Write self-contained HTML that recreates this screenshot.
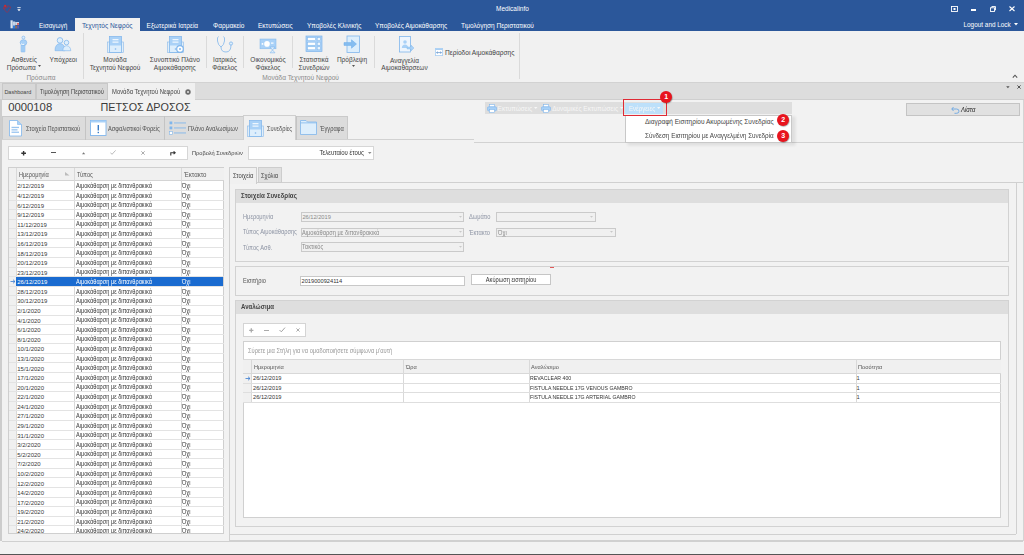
<!DOCTYPE html><html><head><meta charset="utf-8"><style>
html,body{margin:0;padding:0;}
body{width:1024px;height:555px;overflow:hidden;position:relative;background:#f2f2f2;font-family:"Liberation Sans", sans-serif;}
.t{position:absolute;white-space:nowrap;}
</style></head><body>
<div style="position:absolute;left:0px;top:0px;width:1024px;height:31px;background:#2b579a"></div>
<svg style="position:absolute;left:1.5px;top:4px" width="10" height="9.5" viewBox="0 0 10 9.5"><path d="M1.8 4.2 C1.2 2.2 3.5 1.2 4.8 2.6 C6.2 1.3 8.8 1.8 8.3 4.2 C7.8 6.2 6 7.6 5.2 8.4 C3.6 7.4 2.3 6 1.8 4.2Z" fill="none" stroke="#c8232b" stroke-width="0.7" stroke-dasharray="2 0.6"/><circle cx="3.2" cy="1.9" r="1.1" fill="#d42a2a"/><path d="M1 4.5 L5.5 3.5" stroke="#c8232b" stroke-width="0.6"/></svg>
<svg style="position:absolute;left:16.5px;top:6.5px" width="4" height="5" viewBox="0 0 4 5"><rect x="0.3" y="0.3" width="3.4" height="0.8" fill="#fff"/><path d="M0.3 2.3 L3.7 2.3 L2 4.3Z" fill="#fff"/></svg>
<div class="t" style="left:496px;top:6.42px;font-size:6.500px;line-height:6.500px;color:#fff;">Medicalinfo</div>
<svg style="position:absolute;left:951px;top:6px" width="7" height="6" viewBox="0 0 7 6"><rect x="0.5" y="0.5" width="6" height="5" fill="none" stroke="#fff" stroke-width="0.9"/><rect x="2.5" y="2" width="2" height="2" fill="#fff"/></svg>
<div style="position:absolute;left:971px;top:9.2px;width:5px;height:1.6px;background:#fff"></div>
<svg style="position:absolute;left:989.6px;top:5.8px" width="6" height="6" viewBox="0 0 6 6"><rect x="0.5" y="1.8" width="4" height="3.7" fill="none" stroke="#fff" stroke-width="0.9"/><path d="M1.8 1.8 V0.5 H5.5 V4 H4.5" fill="none" stroke="#fff" stroke-width="0.9"/></svg>
<svg style="position:absolute;left:1008.6px;top:6px" width="6" height="5.5" viewBox="0 0 6 5.5"><path d="M0.5 0.5 L5.5 5 M5.5 0.5 L0.5 5" stroke="#fff" stroke-width="1.1"/></svg>
<svg style="position:absolute;left:9.8px;top:20px" width="10" height="9" viewBox="0 0 10 9"><rect x="0.5" y="0.3" width="2.2" height="8" fill="#d9e3f0"/><rect x="2.7" y="1.5" width="2.5" height="6.5" fill="#c5d3e6"/><rect x="5.2" y="2" width="3.8" height="3" fill="#cfd8e4"/><rect x="7" y="3.2" width="2" height="1.5" fill="#e04848"/><rect x="3" y="5.5" width="2.2" height="3" fill="#2f7de0"/><rect x="5.2" y="5.5" width="2" height="3" fill="#8a6d5a"/><rect x="7.2" y="5.5" width="1.8" height="3" fill="#5a5ab0"/></svg>
<div style="position:absolute;left:75px;top:17.5px;width:64.5px;height:14px;background:#f1f1f1"></div>
<div class="t" style="left:39px;top:22.68px;font-size:6.400px;line-height:6.400px;color:#fff;">Εισαγωγή</div>
<div class="t" style="left:82px;top:22.57px;font-size:6.600px;line-height:6.600px;color:#2b579a;">Τεχνητός Νεφρός</div>
<div class="t" style="left:146.6px;top:22.62px;font-size:6.500px;line-height:6.500px;color:#fff;">Εξωτερικά Ιατρεία</div>
<div class="t" style="left:213px;top:22.62px;font-size:6.500px;line-height:6.500px;color:#fff;">Φαρμακείο</div>
<div class="t" style="left:258px;top:22.62px;font-size:6.500px;line-height:6.500px;color:#fff;">Εκτυπώσεις</div>
<div class="t" style="left:307px;top:22.62px;font-size:6.500px;line-height:6.500px;color:#fff;">Υποβολές Κλινικής</div>
<div class="t" style="left:375px;top:22.62px;font-size:6.500px;line-height:6.500px;color:#fff;">Υποβολές Αιμοκάθαρσης</div>
<div class="t" style="left:461px;top:22.62px;font-size:6.500px;line-height:6.500px;color:#fff;">Τιμολόγηση Περιστατικού</div>
<div class="t" style="left:963.5px;top:21.88px;font-size:6.400px;line-height:6.400px;color:#fff;">Logout and Lock</div>
<svg style="position:absolute;left:1014px;top:23px" width="5" height="3" viewBox="0 0 5 3"><path d="M0 0 L4 0 L2 2.5Z" fill="#fff"/></svg>
<div style="position:absolute;left:0px;top:31px;width:1024px;height:51px;background:#f1f1f1"></div>
<div style="position:absolute;left:0px;top:81.5px;width:1024px;height:1px;background:#d5d5d5"></div>
<div style="position:absolute;left:83px;top:32.5px;width:1px;height:46px;background:#dadada"></div>
<div style="position:absolute;left:518.7px;top:32.5px;width:1px;height:46px;background:#dadada"></div>
<div style="position:absolute;left:206.4px;top:36px;width:1px;height:31.7px;background:#dadada"></div>
<div style="position:absolute;left:243.4px;top:36px;width:1px;height:31.7px;background:#dadada"></div>
<div style="position:absolute;left:292.2px;top:36px;width:1px;height:31.7px;background:#dadada"></div>
<div style="position:absolute;left:374.0px;top:36px;width:1px;height:31.7px;background:#dadada"></div>
<svg style="position:absolute;left:19px;top:35px" width="9" height="18" viewBox="0 0 9 18"><rect x="2" y="10" width="4" height="7" rx="0.5" fill="#a9d1f7" stroke="#80b6ec" stroke-width="0.5"/><path d="M4 10.5 V17" stroke="#80b6ec" stroke-width="0.4"/><ellipse cx="4.5" cy="7.6" rx="3.3" ry="2.9" fill="#a9d1f7" stroke="#80b6ec" stroke-width="0.6"/><path d="M2 8.8 Q3 9.8 5.2 9.3" stroke="#fff" stroke-width="0.9" fill="none"/><rect x="3" y="1.2" width="2.8" height="2.8" rx="1.2" fill="#ddeefc" stroke="#80b6ec" stroke-width="0.7"/></svg>
<div class="t" style="left:-126px;width:300px;text-align:center;top:57.22px;font-size:6.500px;line-height:6.500px;color:#444;">Ασθενείς</div>
<div class="t" style="left:6.7px;top:65.02px;font-size:6.500px;line-height:6.500px;color:#444;">Πρόσωπα</div>
<svg style="position:absolute;left:38px;top:65px" width="4" height="3" viewBox="0 0 4 3"><path d="M0 0 L3 0 L1.5 2Z" fill="#555"/></svg>
<div class="t" style="left:-109px;width:300px;text-align:center;top:75.42px;font-size:6.500px;line-height:6.500px;color:#8a8a8a;">Πρόσωπα</div>
<svg style="position:absolute;left:54px;top:36px" width="18" height="16" viewBox="0 0 18 16"><circle cx="6" cy="4.4" r="2.8" fill="#ddeefc" stroke="#80b6ec" stroke-width="0.8"/><path d="M1 14.7 Q1 8 6 7.6 Q11 8 11 14.7Z" fill="#a9d1f7" stroke="#80b6ec" stroke-width="0.6"/><circle cx="12.5" cy="6.6" r="2.3" fill="#ddeefc" stroke="#80b6ec" stroke-width="0.8"/><path d="M8.8 14.7 Q9 10 12.5 9.7 Q16.5 10 16.8 14.7Z" fill="#ddeefc" stroke="#80b6ec" stroke-width="0.6"/></svg>
<div class="t" style="left:-86.8px;width:300px;text-align:center;top:57.22px;font-size:6.500px;line-height:6.500px;color:#444;">Υπόχρεοι</div>
<svg style="position:absolute;left:107px;top:36px" width="18" height="18" viewBox="0 0 18 18"><rect x="0.5" y="6" width="16" height="10.5" fill="#ddeefc" stroke="#80b6ec" stroke-width="0.7" opacity="0.8"/><rect x="2.5" y="0.5" width="12" height="16" fill="#ddeefc" stroke="#80b6ec" stroke-width="0.8"/><rect x="3" y="1" width="11" height="8.5" fill="#a9d1f7"/><rect x="5.5" y="3.2" width="6" height="1" fill="#fff"/><rect x="5.5" y="5.6" width="6" height="1" fill="#fff"/><circle cx="8.5" cy="13" r="0.8" fill="#80b6ec"/></svg>
<div class="t" style="left:-35px;width:300px;text-align:center;top:57.22px;font-size:6.500px;line-height:6.500px;color:#444;">Μονάδα</div>
<div class="t" style="left:-35px;width:300px;text-align:center;top:65.02px;font-size:6.500px;line-height:6.500px;color:#444;">Τεχνητού Νεφρού</div>
<svg style="position:absolute;left:166.5px;top:36px" width="18" height="18" viewBox="0 0 18 18"><rect x="0.5" y="6" width="16" height="10.5" fill="#ddeefc" stroke="#80b6ec" stroke-width="0.7" opacity="0.8"/><rect x="2.5" y="0.5" width="12" height="16" fill="#ddeefc" stroke="#80b6ec" stroke-width="0.8"/><rect x="3" y="1" width="11" height="8.5" fill="#a9d1f7"/><rect x="5.5" y="3.2" width="6" height="1" fill="#fff"/><rect x="5.5" y="5.6" width="6" height="1" fill="#fff"/><circle cx="8.5" cy="13" r="0.8" fill="#80b6ec"/><circle cx="13" cy="13" r="3.3" fill="#fff" stroke="#80b6ec" stroke-width="1.2"/><circle cx="13" cy="13" r="1" fill="#80b6ec"/></svg>
<div class="t" style="left:24.80000000000001px;width:300px;text-align:center;top:57.22px;font-size:6.500px;line-height:6.500px;color:#444;">Συνοπτικό Πλάνο</div>
<div class="t" style="left:24.80000000000001px;width:300px;text-align:center;top:65.02px;font-size:6.500px;line-height:6.500px;color:#444;">Αιμοκάθαρσης</div>
<svg style="position:absolute;left:216px;top:35px" width="18" height="18" viewBox="0 0 18 18"><path d="M2.5 1.5 Q1 2 1.5 6 Q2 10 5 12 Q8 10 8.5 6 Q9 2 7.5 1.5" fill="none" stroke="#80b6ec" stroke-width="0.8"/><path d="M5 12 Q5 17 10 17 Q15 17 15 10" fill="none" stroke="#80b6ec" stroke-width="0.8"/><circle cx="15" cy="8.5" r="1.6" fill="#ddeefc" stroke="#80b6ec" stroke-width="0.8"/></svg>
<div class="t" style="left:74.69999999999999px;width:300px;text-align:center;top:57.22px;font-size:6.500px;line-height:6.500px;color:#444;">Ιατρικός</div>
<div class="t" style="left:74.69999999999999px;width:300px;text-align:center;top:65.02px;font-size:6.500px;line-height:6.500px;color:#444;">Φάκελος</div>
<svg style="position:absolute;left:259px;top:38px" width="18" height="16" viewBox="0 0 18 16"><rect x="1" y="1" width="16" height="9.8" fill="#a9d1f7" stroke="#80b6ec" stroke-width="0.5"/><circle cx="8" cy="5.9" r="2.8" fill="#fff"/><circle cx="3.5" cy="5.9" r="0.9" fill="#fff"/><rect x="12" y="4.5" width="2.5" height="1.2" fill="#fff"/><path d="M11 9 L16 9 L13.5 12 L16 14.8 L11 14.8 L13.5 12Z" fill="#ddeefc" stroke="#80b6ec" stroke-width="0.6"/></svg>
<div class="t" style="left:118px;width:300px;text-align:center;top:57.22px;font-size:6.500px;line-height:6.500px;color:#444;">Οικονομικός</div>
<div class="t" style="left:118px;width:300px;text-align:center;top:65.02px;font-size:6.500px;line-height:6.500px;color:#444;">Φάκελος</div>
<svg style="position:absolute;left:305px;top:35px" width="18" height="18" viewBox="0 0 18 18"><rect x="1" y="1" width="16" height="15.6" fill="#a9d1f7" stroke="#80b6ec" stroke-width="0.7"/><rect x="2.6" y="2.6" width="8" height="3" fill="#fff" stroke="#80b6ec" stroke-width="0.5"/><rect x="12.2" y="2.6" width="3.2" height="3" fill="#eef6fd" stroke="#80b6ec" stroke-width="0.5"/><rect x="2.6" y="7.199999999999999" width="8" height="3" fill="#fff" stroke="#80b6ec" stroke-width="0.5"/><rect x="12.2" y="7.199999999999999" width="3.2" height="3" fill="#eef6fd" stroke="#80b6ec" stroke-width="0.5"/><rect x="2.6" y="11.799999999999999" width="8" height="3" fill="#fff" stroke="#80b6ec" stroke-width="0.5"/><rect x="12.2" y="11.799999999999999" width="3.2" height="3" fill="#eef6fd" stroke="#80b6ec" stroke-width="0.5"/></svg>
<div class="t" style="left:164px;width:300px;text-align:center;top:57.22px;font-size:6.500px;line-height:6.500px;color:#444;">Στατιστικά</div>
<div class="t" style="left:164px;width:300px;text-align:center;top:65.02px;font-size:6.500px;line-height:6.500px;color:#444;">Συνεδριών</div>
<svg style="position:absolute;left:343px;top:35px" width="18" height="18" viewBox="0 0 18 18"><rect x="4" y="1" width="12.5" height="16.5" fill="#ddeefc" stroke="#80b6ec" stroke-width="0.8"/><path d="M1 7.6 L8.5 7.6 L8.5 4.8 L13.5 9 L8.5 13.2 L8.5 10.4 L1 10.4Z" fill="#86bdf0" stroke="#6aaae8" stroke-width="0.5"/></svg>
<div class="t" style="left:202px;width:300px;text-align:center;top:57.22px;font-size:6.500px;line-height:6.500px;color:#444;">Πρόβλεψη</div>
<svg style="position:absolute;left:351.7px;top:65.3px" width="4" height="3" viewBox="0 0 4 3"><path d="M0 0 L3 0 L1.5 2Z" fill="#555"/></svg>
<div class="t" style="left:150.60000000000002px;width:300px;text-align:center;top:75.37px;font-size:6.600px;line-height:6.600px;color:#8a8a8a;">Μονάδα Τεχνητού Νεφρού</div>
<svg style="position:absolute;left:397px;top:35px" width="18" height="18" viewBox="0 0 18 18"><rect x="2.5" y="1.5" width="11" height="15.5" fill="#eef5fd" stroke="#80b6ec" stroke-width="0.8"/><circle cx="8" cy="7" r="1.8" fill="#a9d1f7"/><path d="M4.8 13 Q5 9.5 8 9.5 Q11 9.5 11 13Z" fill="#a9d1f7"/><path d="M10 12 L14 12 L14 10 L17 13 L14 16 L14 14 L10 14Z" fill="#a9d1f7" stroke="#80b6ec" stroke-width="0.4"/></svg>
<div class="t" style="left:254.5px;width:300px;text-align:center;top:57.72px;font-size:6.500px;line-height:6.500px;color:#444;">Αναγγελία</div>
<div class="t" style="left:254.5px;width:300px;text-align:center;top:65.12px;font-size:6.500px;line-height:6.500px;color:#444;">Αιμοκαθάρσεων</div>
<svg style="position:absolute;left:434.8px;top:47.8px" width="8" height="8" viewBox="0 0 8 8"><rect x="0.4" y="0.4" width="7.2" height="7.2" fill="#fff" stroke="#a9cff3" stroke-width="0.8"/><rect x="0.4" y="0.4" width="7.2" height="1.6" fill="#a9cff3"/><path d="M1.6 4.6 H6.4 M1.6 4.6 L2.7 3.7 M1.6 4.6 L2.7 5.5 M6.4 4.6 L5.3 3.7 M6.4 4.6 L5.3 5.5" stroke="#3a78c0" stroke-width="0.6" fill="none"/></svg>
<div class="t" style="left:445px;top:50.07px;font-size:6.600px;line-height:6.600px;color:#444;">Περίοδοι Αιμοκάθαρσης</div>
<svg style="position:absolute;left:1011.6px;top:74px" width="6" height="5" viewBox="0 0 6 5"><path d="M0.8 3.6 L3 1.2 L5.2 3.6" fill="none" stroke="#555" stroke-width="1.1"/></svg>
<div style="position:absolute;left:0px;top:81.5px;width:1024px;height:18px;background:#dddddd;border-top:1px solid #d2d2d2;border-bottom:1px solid #cfcfcf;box-sizing:border-box"></div>
<div style="position:absolute;left:1.5px;top:83px;width:34.5px;height:16.5px;background:#d8d8d8;border:1px solid #c8c8c8;box-sizing:border-box"></div>
<div class="t" style="left:4.4px;top:89.77px;font-size:5.500px;line-height:5.500px;color:#444;">Dashboard</div>
<div style="position:absolute;left:36px;top:83px;width:72px;height:16.5px;background:#d8d8d8;border:1px solid #c8c8c8;box-sizing:border-box"></div>
<div class="t" style="left:40.1px;top:89.35px;font-size:6.270px;line-height:6.270px;color:#444;transform:scaleX(0.9091);transform-origin:left center;">Τιμολόγηση Περιστατικού</div>
<div style="position:absolute;left:108px;top:83px;width:87px;height:16.5px;background:#f0f0f0"></div>
<div class="t" style="left:111.6px;top:89.25px;font-size:6.457px;line-height:6.457px;color:#444;transform:scaleX(0.9091);transform-origin:left center;">Μονάδα Τεχνητού Νεφρού</div>
<svg style="position:absolute;left:184.6px;top:88.6px" width="6" height="6" viewBox="0 0 6 6"><circle cx="3" cy="3" r="2.7" fill="#6a6a6a"/><path d="M1.9 1.9 L4.1 4.1 M4.1 1.9 L1.9 4.1" stroke="#ddd" stroke-width="0.8"/></svg>
<svg style="position:absolute;left:1006.2px;top:85.6px" width="4" height="3" viewBox="0 0 4 3"><path d="M0.2 0.3 L3.6 0.3 L1.9 2.2Z" fill="#555"/></svg>
<svg style="position:absolute;left:1016.8px;top:84.8px" width="4" height="4" viewBox="0 0 4 4"><path d="M0.4 0.4 L3.6 3.6 M3.6 0.4 L0.4 3.6" stroke="#555" stroke-width="1"/></svg>
<div style="position:absolute;left:0px;top:99.5px;width:1.6px;height:441.5px;background:#cdcdcd"></div>
<div class="t" style="left:8.2px;top:101.58px;font-size:11.300px;line-height:11.300px;color:#3a3a3a;">0000108</div>
<div class="t" style="left:100.4px;top:101.86px;font-size:10.800px;line-height:10.800px;color:#3a3a3a;">ΠΕΤΣΟΣ ΔΡΟΣΟΣ</div>
<div style="position:absolute;left:473.7px;top:100px;width:550.3px;height:43.4px;background:#f2f2f2;border-bottom:1px solid #d2d2d2;box-sizing:border-box"></div>
<div style="position:absolute;left:485px;top:102.4px;width:307px;height:11.4px;background:#dedede"></div>
<svg style="position:absolute;left:486.5px;top:104px" width="10" height="9" viewBox="0 0 10 9"><rect x="2.5" y="0.5" width="5" height="2.5" fill="#fff" stroke="#80b6ec" stroke-width="0.6"/><rect x="0.5" y="2.8" width="9" height="4" rx="1" fill="#a9d1f7" stroke="#80b6ec" stroke-width="0.6"/><rect x="2.5" y="5.5" width="5" height="3" fill="#fff" stroke="#80b6ec" stroke-width="0.6"/></svg>
<div class="t" style="left:497.6px;top:106.22px;font-size:6.500px;line-height:6.500px;color:#f7f7f7;">Εκτυπώσεις</div>
<svg style="position:absolute;left:534px;top:107px" width="4" height="3" viewBox="0 0 4 3"><path d="M0 0 L3.5 0 L1.75 2Z" fill="#f7f7f7"/></svg>
<svg style="position:absolute;left:540.7px;top:104px" width="10" height="9" viewBox="0 0 10 9"><rect x="2.5" y="0.5" width="5" height="2.5" fill="#fff" stroke="#80b6ec" stroke-width="0.6"/><rect x="0.5" y="2.8" width="9" height="4" rx="1" fill="#a9d1f7" stroke="#80b6ec" stroke-width="0.6"/><rect x="2.5" y="5.5" width="5" height="3" fill="#fff" stroke="#80b6ec" stroke-width="0.6"/></svg>
<div class="t" style="left:552.2px;top:106.22px;font-size:6.500px;line-height:6.500px;color:#f7f7f7;">Δυναμικές Εκτυπώσεις</div>
<svg style="position:absolute;left:619.5px;top:107px" width="4" height="3" viewBox="0 0 4 3"><path d="M0 0 L3.5 0 L1.75 2Z" fill="#f7f7f7"/></svg>
<div style="position:absolute;left:624.8px;top:102.5px;width:38.2px;height:11px;background:#bde0fa"></div>
<div class="t" style="left:628.75px;top:106.11px;font-size:6.710px;line-height:6.710px;color:#f7f7f7;transform:scaleX(0.9091);transform-origin:left center;">Ενέργειες</div>
<svg style="position:absolute;left:656.5px;top:107px" width="4" height="3" viewBox="0 0 4 3"><path d="M0 0 L3.5 0 L1.75 2Z" fill="#f7f7f7"/></svg>
<div style="position:absolute;left:906px;top:103px;width:113.5px;height:12.5px;background:#e1e1e1;border:1px solid #c4c4c4;box-sizing:border-box"></div>
<svg style="position:absolute;left:950.5px;top:105.5px" width="9" height="8" viewBox="0 0 9 8"><path d="M2.5 1 L0.8 3 L2.5 5 M0.8 3 H5.5 Q8 3 8 5.2 Q8 7.3 5.5 7.3 H3.5" fill="none" stroke="#6aa6e3" stroke-width="0.9"/></svg>
<div class="t" style="left:960.5px;top:106.53px;font-size:6.490px;line-height:6.490px;color:#222;transform:scaleX(0.9091);transform-origin:left center;font-style:italic">Λίστα</div>
<div style="position:absolute;left:2.3px;top:115.5px;width:345.7px;height:24px;background:#dcdcdc;border:1px solid #cacaca;border-bottom:none;box-sizing:border-box"></div>
<div style="position:absolute;left:2px;top:139.2px;width:471.7px;height:1px;background:#d2d2d2"></div>
<div style="position:absolute;left:85.3px;top:116px;width:1px;height:23.5px;background:#c4c4c4"></div>
<div style="position:absolute;left:164.2px;top:116px;width:1px;height:23.5px;background:#c4c4c4"></div>
<div style="position:absolute;left:296.2px;top:116px;width:1px;height:23.5px;background:#c4c4c4"></div>
<div style="position:absolute;left:242.7px;top:115px;width:53.5px;height:25px;background:#f0f0f0;border:1px solid #cfcfcf;border-bottom:none;box-sizing:border-box"></div>
<svg style="position:absolute;left:8.5px;top:119.5px" width="14" height="17" viewBox="0 0 14 17"><path d="M0.5 0.5 H8.5 L12.5 4.5 V16 H0.5Z" fill="#fff" stroke="#80b6ec" stroke-width="0.8"/><path d="M8.5 0.5 V4.5 H12.5" fill="#a9d1f7" stroke="#80b6ec" stroke-width="0.6"/><rect x="2.5" y="6.8" width="7.5" height="1.3" fill="#80b6ec" opacity="0.8"/><rect x="2.5" y="9.2" width="6" height="1.3" fill="#80b6ec" opacity="0.8"/><rect x="2.5" y="11.6" width="7.5" height="1.3" fill="#80b6ec" opacity="0.8"/></svg>
<div class="t" style="left:26.4px;top:125.75px;font-size:6.270px;line-height:6.270px;color:#505050;transform:scaleX(0.9091);transform-origin:left center;">Στοιχεία Περιστατικού</div>
<svg style="position:absolute;left:89.5px;top:119.5px" width="17" height="16" viewBox="0 0 17 16"><rect x="0.5" y="0.5" width="15.5" height="15" fill="#fff" stroke="#80b6ec" stroke-width="0.9"/><rect x="0.5" y="0.5" width="15.5" height="2" fill="#a9d1f7"/><rect x="7.6" y="5" width="1.4" height="5.5" fill="#3a7cc6"/><rect x="7.6" y="11.8" width="1.4" height="1.4" fill="#3a7cc6"/></svg>
<div class="t" style="left:108px;top:125.75px;font-size:6.270px;line-height:6.270px;color:#505050;transform:scaleX(0.9091);transform-origin:left center;">Ασφαλιστικοί Φορείς</div>
<svg style="position:absolute;left:168.5px;top:120.5px" width="18" height="14" viewBox="0 0 18 14"><rect x="0.5" y="0.5" width="2.8" height="2.8" fill="#80b6ec"/><rect x="0.5" y="5.5" width="2.8" height="2.8" fill="#80b6ec"/><rect x="0.5" y="10.5" width="2.8" height="2.8" fill="#fff" stroke="#80b6ec" stroke-width="0.6"/><rect x="5" y="1.5" width="12" height="0.9" fill="#80b6ec"/><rect x="5" y="6.5" width="12" height="0.9" fill="#80b6ec"/><rect x="5" y="11.5" width="12" height="0.9" fill="#80b6ec"/></svg>
<div class="t" style="left:188.4px;top:125.75px;font-size:6.270px;line-height:6.270px;color:#505050;transform:scaleX(0.9091);transform-origin:left center;">Πλάνο Αναλωσίμων</div>
<svg style="position:absolute;left:246.5px;top:119.5px" width="18" height="18" viewBox="0 0 18 18"><rect x="0.5" y="6" width="16" height="10.5" fill="#ddeefc" stroke="#80b6ec" stroke-width="0.7" opacity="0.8"/><rect x="2.5" y="0.5" width="12" height="16" fill="#ddeefc" stroke="#80b6ec" stroke-width="0.8"/><rect x="3" y="1" width="11" height="8.5" fill="#a9d1f7"/><rect x="5.5" y="3.2" width="6" height="1" fill="#fff"/><rect x="5.5" y="5.6" width="6" height="1" fill="#fff"/><circle cx="8.5" cy="13" r="0.8" fill="#80b6ec"/></svg>
<div class="t" style="left:266.9px;top:125.75px;font-size:6.270px;line-height:6.270px;color:#505050;transform:scaleX(0.9091);transform-origin:left center;">Συνεδρίες</div>
<svg style="position:absolute;left:299.5px;top:120px" width="18" height="15" viewBox="0 0 18 15"><path d="M0.5 0.5 H6 L7.5 2 H16.5 V14.5 H0.5Z" fill="#ddeefc" stroke="#80b6ec" stroke-width="0.8"/><rect x="0.5" y="2.5" width="16" height="0.8" fill="#80b6ec"/></svg>
<div class="t" style="left:320.2px;top:125.75px;font-size:6.270px;line-height:6.270px;color:#505050;transform:scaleX(0.9091);transform-origin:left center;">Έγγραφα</div>
<div style="position:absolute;left:8.2px;top:146.2px;width:180px;height:13.5px;background:#fff;border:1px solid #d6d6d6;box-sizing:border-box"></div>
<svg style="position:absolute;left:21px;top:150.5px" width="6" height="5" viewBox="0 0 6 5"><path d="M2.6 0 V4.6 M0.3 2.3 H5" stroke="#333" stroke-width="1.4"/></svg>
<div style="position:absolute;left:51px;top:152px;width:4.8px;height:1.4px;background:#555"></div>
<svg style="position:absolute;left:81.8px;top:151.5px" width="4" height="3" viewBox="0 0 4 3"><path d="M0 2.3 L3.2 2.3 L1.6 0.2Z" fill="#777"/></svg>
<svg style="position:absolute;left:110.2px;top:150.4px" width="6" height="5" viewBox="0 0 6 5"><path d="M0.4 2.6 L2 4.3 L5.6 0.4" fill="none" stroke="#aaa" stroke-width="0.8"/></svg>
<svg style="position:absolute;left:140.9px;top:150.9px" width="4" height="4" viewBox="0 0 4 4"><path d="M0.3 0.3 L3.7 3.7 M3.7 0.3 L0.3 3.7" stroke="#999" stroke-width="0.8"/></svg>
<svg style="position:absolute;left:169.5px;top:150.5px" width="6" height="5" viewBox="0 0 6 5"><path d="M0.8 4.6 V1.8 H5 M3.6 0.4 L5.2 1.8 L3.6 3.2" fill="none" stroke="#333" stroke-width="1.1"/></svg>
<div class="t" style="left:191.75px;top:150.28px;font-size:6.215px;line-height:6.215px;color:#444;transform:scaleX(0.9091);transform-origin:left center;">Προβολή Συνεδριών</div>
<div style="position:absolute;left:248.4px;top:146.3px;width:125.9px;height:13.3px;background:#fff;border:1px solid #d6d6d6;box-sizing:border-box"></div>
<div class="t" style="left:63.69999999999999px;width:300px;text-align:right;top:149.77px;font-size:6.600px;line-height:6.600px;color:#333;transform:scaleX(0.9091);transform-origin:right center;">Τελευταίου έτους</div>
<svg style="position:absolute;left:367.8px;top:152.3px" width="4" height="3" viewBox="0 0 4 3"><path d="M0 0 L3.5 0 L1.75 2Z" fill="#888"/></svg>
<div style="position:absolute;left:8.1px;top:167px;width:216.4px;height:366.75px;background:#fff;border:1px solid #cfcfcf;box-sizing:border-box"></div>
<div style="position:absolute;left:8.6px;top:167.5px;width:215.4px;height:13.5px;background:#f0f0f0;border-bottom:1px solid #d4d4d4;box-sizing:border-box"></div>
<div style="position:absolute;left:8.6px;top:167.5px;width:8px;height:365.75px;background:#f0f0f0"></div>
<div style="position:absolute;left:16.1px;top:167.5px;width:0.8px;height:365.75px;background:#d9d9d9"></div>
<div style="position:absolute;left:74.4px;top:167.5px;width:0.8px;height:365.75px;background:#d9d9d9"></div>
<div style="position:absolute;left:180.9px;top:167.5px;width:0.8px;height:365.75px;background:#d9d9d9"></div>
<div class="t" style="left:19px;top:171.67px;font-size:6.600px;line-height:6.600px;color:#555;transform:scaleX(0.8545);transform-origin:left center;">Ημερομηνία</div>
<svg style="position:absolute;left:64.5px;top:172px" width="5" height="4" viewBox="0 0 5 4"><path d="M0 0 L4.5 3.5 L0 3.5Z" fill="#bbb"/></svg>
<div class="t" style="left:77.4px;top:171.67px;font-size:6.600px;line-height:6.600px;color:#555;transform:scaleX(0.8636);transform-origin:left center;">Τύπος</div>
<div class="t" style="left:184.3px;top:171.61px;font-size:6.710px;line-height:6.710px;color:#555;transform:scaleX(0.9091);transform-origin:left center;">Έκτακτο</div>
<div style="position:absolute;left:8.1px;top:167px;width:216.4px;height:365.75px;overflow:hidden">
<div style="position:absolute;left:0.5px;top:23px;width:215.4px;height:1px;background:#e3e3e3"></div>
<div class="t" style="left:9.200000000000001px;top:16.44px;font-size:6.000px;line-height:6.000px;color:#383838;">2/12/2019</div>
<div class="t" style="left:67.60000000000001px;top:16.11px;font-size:6.600px;line-height:6.600px;color:#383838;transform:scaleX(0.8482);transform-origin:left center;">Αιμοκάθαρση με διπανθρακικά</div>
<div class="t" style="left:174.4px;top:16.11px;font-size:6.600px;line-height:6.600px;color:#383838;transform:scaleX(0.8482);transform-origin:left center;">Όχι</div>
<div style="position:absolute;left:0.5px;top:33px;width:215.4px;height:1px;background:#e3e3e3"></div>
<div class="t" style="left:9.200000000000001px;top:26.02px;font-size:6.000px;line-height:6.000px;color:#383838;">4/12/2019</div>
<div class="t" style="left:67.60000000000001px;top:25.69px;font-size:6.600px;line-height:6.600px;color:#383838;transform:scaleX(0.8482);transform-origin:left center;">Αιμοκάθαρση με διπανθρακικά</div>
<div class="t" style="left:174.4px;top:25.69px;font-size:6.600px;line-height:6.600px;color:#383838;transform:scaleX(0.8482);transform-origin:left center;">Όχι</div>
<div style="position:absolute;left:0.5px;top:42px;width:215.4px;height:1px;background:#e3e3e3"></div>
<div class="t" style="left:9.200000000000001px;top:35.61px;font-size:6.000px;line-height:6.000px;color:#383838;">6/12/2019</div>
<div class="t" style="left:67.60000000000001px;top:35.28px;font-size:6.600px;line-height:6.600px;color:#383838;transform:scaleX(0.8482);transform-origin:left center;">Αιμοκάθαρση με διπανθρακικά</div>
<div class="t" style="left:174.4px;top:35.28px;font-size:6.600px;line-height:6.600px;color:#383838;transform:scaleX(0.8482);transform-origin:left center;">Όχι</div>
<div style="position:absolute;left:0.5px;top:52px;width:215.4px;height:1px;background:#e3e3e3"></div>
<div class="t" style="left:9.200000000000001px;top:45.19px;font-size:6.000px;line-height:6.000px;color:#383838;">9/12/2019</div>
<div class="t" style="left:67.60000000000001px;top:44.86px;font-size:6.600px;line-height:6.600px;color:#383838;transform:scaleX(0.8482);transform-origin:left center;">Αιμοκάθαρση με διπανθρακικά</div>
<div class="t" style="left:174.4px;top:44.86px;font-size:6.600px;line-height:6.600px;color:#383838;transform:scaleX(0.8482);transform-origin:left center;">Όχι</div>
<div style="position:absolute;left:0.5px;top:61px;width:215.4px;height:1px;background:#e3e3e3"></div>
<div class="t" style="left:9.200000000000001px;top:54.77px;font-size:6.000px;line-height:6.000px;color:#383838;">11/12/2019</div>
<div class="t" style="left:67.60000000000001px;top:54.44px;font-size:6.600px;line-height:6.600px;color:#383838;transform:scaleX(0.8482);transform-origin:left center;">Αιμοκάθαρση με διπανθρακικά</div>
<div class="t" style="left:174.4px;top:54.44px;font-size:6.600px;line-height:6.600px;color:#383838;transform:scaleX(0.8482);transform-origin:left center;">Όχι</div>
<div style="position:absolute;left:0.5px;top:71px;width:215.4px;height:1px;background:#e3e3e3"></div>
<div class="t" style="left:9.200000000000001px;top:64.36px;font-size:6.000px;line-height:6.000px;color:#383838;">13/12/2019</div>
<div class="t" style="left:67.60000000000001px;top:64.03px;font-size:6.600px;line-height:6.600px;color:#383838;transform:scaleX(0.8482);transform-origin:left center;">Αιμοκάθαρση με διπανθρακικά</div>
<div class="t" style="left:174.4px;top:64.03px;font-size:6.600px;line-height:6.600px;color:#383838;transform:scaleX(0.8482);transform-origin:left center;">Όχι</div>
<div style="position:absolute;left:0.5px;top:80px;width:215.4px;height:1px;background:#e3e3e3"></div>
<div class="t" style="left:9.200000000000001px;top:73.94px;font-size:6.000px;line-height:6.000px;color:#383838;">16/12/2019</div>
<div class="t" style="left:67.60000000000001px;top:73.61px;font-size:6.600px;line-height:6.600px;color:#383838;transform:scaleX(0.8482);transform-origin:left center;">Αιμοκάθαρση με διπανθρακικά</div>
<div class="t" style="left:174.4px;top:73.61px;font-size:6.600px;line-height:6.600px;color:#383838;transform:scaleX(0.8482);transform-origin:left center;">Όχι</div>
<div style="position:absolute;left:0.5px;top:90px;width:215.4px;height:1px;background:#e3e3e3"></div>
<div class="t" style="left:9.200000000000001px;top:83.52px;font-size:6.000px;line-height:6.000px;color:#383838;">18/12/2019</div>
<div class="t" style="left:67.60000000000001px;top:83.19px;font-size:6.600px;line-height:6.600px;color:#383838;transform:scaleX(0.8482);transform-origin:left center;">Αιμοκάθαρση με διπανθρακικά</div>
<div class="t" style="left:174.4px;top:83.19px;font-size:6.600px;line-height:6.600px;color:#383838;transform:scaleX(0.8482);transform-origin:left center;">Όχι</div>
<div style="position:absolute;left:0.5px;top:100px;width:215.4px;height:1px;background:#e3e3e3"></div>
<div class="t" style="left:9.200000000000001px;top:93.11px;font-size:6.000px;line-height:6.000px;color:#383838;">20/12/2019</div>
<div class="t" style="left:67.60000000000001px;top:92.78px;font-size:6.600px;line-height:6.600px;color:#383838;transform:scaleX(0.8482);transform-origin:left center;">Αιμοκάθαρση με διπανθρακικά</div>
<div class="t" style="left:174.4px;top:92.78px;font-size:6.600px;line-height:6.600px;color:#383838;transform:scaleX(0.8482);transform-origin:left center;">Όχι</div>
<div style="position:absolute;left:0.5px;top:109px;width:215.4px;height:1px;background:#e3e3e3"></div>
<div class="t" style="left:9.200000000000001px;top:102.69px;font-size:6.000px;line-height:6.000px;color:#383838;">23/12/2019</div>
<div class="t" style="left:67.60000000000001px;top:102.36px;font-size:6.600px;line-height:6.600px;color:#383838;transform:scaleX(0.8482);transform-origin:left center;">Αιμοκάθαρση με διπανθρακικά</div>
<div class="t" style="left:174.4px;top:102.36px;font-size:6.600px;line-height:6.600px;color:#383838;transform:scaleX(0.8482);transform-origin:left center;">Όχι</div>
<div style="position:absolute;left:8.299999999999999px;top:110.08000000000001px;width:207.1px;height:8.783px;background:#1a6bd0"></div>
<div style="position:absolute;left:0.5px;top:119px;width:215.4px;height:1px;background:#e3e3e3"></div>
<div class="t" style="left:9.200000000000001px;top:112.27px;font-size:6.000px;line-height:6.000px;color:#fff;">26/12/2019</div>
<div class="t" style="left:67.60000000000001px;top:111.94px;font-size:6.600px;line-height:6.600px;color:#fff;transform:scaleX(0.8482);transform-origin:left center;">Αιμοκάθαρση με διπανθρακικά</div>
<div class="t" style="left:174.4px;top:111.94px;font-size:6.600px;line-height:6.600px;color:#fff;transform:scaleX(0.8482);transform-origin:left center;">Όχι</div>
<svg style="position:absolute;left:1.9000000000000004px;top:112.28px" width="6" height="5" viewBox="0 0 6 5"><path d="M0.5 2.5 H5 M3 0.7 L5 2.5 L3 4.3" fill="none" stroke="#3a7cd0" stroke-width="0.8"/></svg>
<div style="position:absolute;left:0.5px;top:128px;width:215.4px;height:1px;background:#e3e3e3"></div>
<div class="t" style="left:9.200000000000001px;top:121.85px;font-size:6.000px;line-height:6.000px;color:#383838;">28/12/2019</div>
<div class="t" style="left:67.60000000000001px;top:121.52px;font-size:6.600px;line-height:6.600px;color:#383838;transform:scaleX(0.8482);transform-origin:left center;">Αιμοκάθαρση με διπανθρακικά</div>
<div class="t" style="left:174.4px;top:121.52px;font-size:6.600px;line-height:6.600px;color:#383838;transform:scaleX(0.8482);transform-origin:left center;">Όχι</div>
<div style="position:absolute;left:0.5px;top:138px;width:215.4px;height:1px;background:#e3e3e3"></div>
<div class="t" style="left:9.200000000000001px;top:131.44px;font-size:6.000px;line-height:6.000px;color:#383838;">30/12/2019</div>
<div class="t" style="left:67.60000000000001px;top:131.11px;font-size:6.600px;line-height:6.600px;color:#383838;transform:scaleX(0.8482);transform-origin:left center;">Αιμοκάθαρση με διπανθρακικά</div>
<div class="t" style="left:174.4px;top:131.11px;font-size:6.600px;line-height:6.600px;color:#383838;transform:scaleX(0.8482);transform-origin:left center;">Όχι</div>
<div style="position:absolute;left:0.5px;top:148px;width:215.4px;height:1px;background:#e3e3e3"></div>
<div class="t" style="left:9.200000000000001px;top:141.02px;font-size:6.000px;line-height:6.000px;color:#383838;">2/1/2020</div>
<div class="t" style="left:67.60000000000001px;top:140.69px;font-size:6.600px;line-height:6.600px;color:#383838;transform:scaleX(0.8482);transform-origin:left center;">Αιμοκάθαρση με διπανθρακικά</div>
<div class="t" style="left:174.4px;top:140.69px;font-size:6.600px;line-height:6.600px;color:#383838;transform:scaleX(0.8482);transform-origin:left center;">Όχι</div>
<div style="position:absolute;left:0.5px;top:157px;width:215.4px;height:1px;background:#e3e3e3"></div>
<div class="t" style="left:9.200000000000001px;top:150.60px;font-size:6.000px;line-height:6.000px;color:#383838;">4/1/2020</div>
<div class="t" style="left:67.60000000000001px;top:150.27px;font-size:6.600px;line-height:6.600px;color:#383838;transform:scaleX(0.8482);transform-origin:left center;">Αιμοκάθαρση με διπανθρακικά</div>
<div class="t" style="left:174.4px;top:150.27px;font-size:6.600px;line-height:6.600px;color:#383838;transform:scaleX(0.8482);transform-origin:left center;">Όχι</div>
<div style="position:absolute;left:0.5px;top:167px;width:215.4px;height:1px;background:#e3e3e3"></div>
<div class="t" style="left:9.200000000000001px;top:160.19px;font-size:6.000px;line-height:6.000px;color:#383838;">6/1/2020</div>
<div class="t" style="left:67.60000000000001px;top:159.86px;font-size:6.600px;line-height:6.600px;color:#383838;transform:scaleX(0.8482);transform-origin:left center;">Αιμοκάθαρση με διπανθρακικά</div>
<div class="t" style="left:174.4px;top:159.86px;font-size:6.600px;line-height:6.600px;color:#383838;transform:scaleX(0.8482);transform-origin:left center;">Όχι</div>
<div style="position:absolute;left:0.5px;top:176px;width:215.4px;height:1px;background:#e3e3e3"></div>
<div class="t" style="left:9.200000000000001px;top:169.77px;font-size:6.000px;line-height:6.000px;color:#383838;">8/1/2020</div>
<div class="t" style="left:67.60000000000001px;top:169.44px;font-size:6.600px;line-height:6.600px;color:#383838;transform:scaleX(0.8482);transform-origin:left center;">Αιμοκάθαρση με διπανθρακικά</div>
<div class="t" style="left:174.4px;top:169.44px;font-size:6.600px;line-height:6.600px;color:#383838;transform:scaleX(0.8482);transform-origin:left center;">Όχι</div>
<div style="position:absolute;left:0.5px;top:186px;width:215.4px;height:1px;background:#e3e3e3"></div>
<div class="t" style="left:9.200000000000001px;top:179.35px;font-size:6.000px;line-height:6.000px;color:#383838;">10/1/2020</div>
<div class="t" style="left:67.60000000000001px;top:179.02px;font-size:6.600px;line-height:6.600px;color:#383838;transform:scaleX(0.8482);transform-origin:left center;">Αιμοκάθαρση με διπανθρακικά</div>
<div class="t" style="left:174.4px;top:179.02px;font-size:6.600px;line-height:6.600px;color:#383838;transform:scaleX(0.8482);transform-origin:left center;">Όχι</div>
<div style="position:absolute;left:0.5px;top:195px;width:215.4px;height:1px;background:#e3e3e3"></div>
<div class="t" style="left:9.200000000000001px;top:188.94px;font-size:6.000px;line-height:6.000px;color:#383838;">13/1/2020</div>
<div class="t" style="left:67.60000000000001px;top:188.61px;font-size:6.600px;line-height:6.600px;color:#383838;transform:scaleX(0.8482);transform-origin:left center;">Αιμοκάθαρση με διπανθρακικά</div>
<div class="t" style="left:174.4px;top:188.61px;font-size:6.600px;line-height:6.600px;color:#383838;transform:scaleX(0.8482);transform-origin:left center;">Όχι</div>
<div style="position:absolute;left:0.5px;top:205px;width:215.4px;height:1px;background:#e3e3e3"></div>
<div class="t" style="left:9.200000000000001px;top:198.52px;font-size:6.000px;line-height:6.000px;color:#383838;">15/1/2020</div>
<div class="t" style="left:67.60000000000001px;top:198.19px;font-size:6.600px;line-height:6.600px;color:#383838;transform:scaleX(0.8482);transform-origin:left center;">Αιμοκάθαρση με διπανθρακικά</div>
<div class="t" style="left:174.4px;top:198.19px;font-size:6.600px;line-height:6.600px;color:#383838;transform:scaleX(0.8482);transform-origin:left center;">Όχι</div>
<div style="position:absolute;left:0.5px;top:215px;width:215.4px;height:1px;background:#e3e3e3"></div>
<div class="t" style="left:9.200000000000001px;top:208.10px;font-size:6.000px;line-height:6.000px;color:#383838;">17/1/2020</div>
<div class="t" style="left:67.60000000000001px;top:207.77px;font-size:6.600px;line-height:6.600px;color:#383838;transform:scaleX(0.8482);transform-origin:left center;">Αιμοκάθαρση με διπανθρακικά</div>
<div class="t" style="left:174.4px;top:207.77px;font-size:6.600px;line-height:6.600px;color:#383838;transform:scaleX(0.8482);transform-origin:left center;">Όχι</div>
<div style="position:absolute;left:0.5px;top:224px;width:215.4px;height:1px;background:#e3e3e3"></div>
<div class="t" style="left:9.200000000000001px;top:217.68px;font-size:6.000px;line-height:6.000px;color:#383838;">20/1/2020</div>
<div class="t" style="left:67.60000000000001px;top:217.35px;font-size:6.600px;line-height:6.600px;color:#383838;transform:scaleX(0.8482);transform-origin:left center;">Αιμοκάθαρση με διπανθρακικά</div>
<div class="t" style="left:174.4px;top:217.35px;font-size:6.600px;line-height:6.600px;color:#383838;transform:scaleX(0.8482);transform-origin:left center;">Όχι</div>
<div style="position:absolute;left:0.5px;top:234px;width:215.4px;height:1px;background:#e3e3e3"></div>
<div class="t" style="left:9.200000000000001px;top:227.27px;font-size:6.000px;line-height:6.000px;color:#383838;">22/1/2020</div>
<div class="t" style="left:67.60000000000001px;top:226.94px;font-size:6.600px;line-height:6.600px;color:#383838;transform:scaleX(0.8482);transform-origin:left center;">Αιμοκάθαρση με διπανθρακικά</div>
<div class="t" style="left:174.4px;top:226.94px;font-size:6.600px;line-height:6.600px;color:#383838;transform:scaleX(0.8482);transform-origin:left center;">Όχι</div>
<div style="position:absolute;left:0.5px;top:243px;width:215.4px;height:1px;background:#e3e3e3"></div>
<div class="t" style="left:9.200000000000001px;top:236.85px;font-size:6.000px;line-height:6.000px;color:#383838;">24/1/2020</div>
<div class="t" style="left:67.60000000000001px;top:236.52px;font-size:6.600px;line-height:6.600px;color:#383838;transform:scaleX(0.8482);transform-origin:left center;">Αιμοκάθαρση με διπανθρακικά</div>
<div class="t" style="left:174.4px;top:236.52px;font-size:6.600px;line-height:6.600px;color:#383838;transform:scaleX(0.8482);transform-origin:left center;">Όχι</div>
<div style="position:absolute;left:0.5px;top:253px;width:215.4px;height:1px;background:#e3e3e3"></div>
<div class="t" style="left:9.200000000000001px;top:246.43px;font-size:6.000px;line-height:6.000px;color:#383838;">27/1/2020</div>
<div class="t" style="left:67.60000000000001px;top:246.10px;font-size:6.600px;line-height:6.600px;color:#383838;transform:scaleX(0.8482);transform-origin:left center;">Αιμοκάθαρση με διπανθρακικά</div>
<div class="t" style="left:174.4px;top:246.10px;font-size:6.600px;line-height:6.600px;color:#383838;transform:scaleX(0.8482);transform-origin:left center;">Όχι</div>
<div style="position:absolute;left:0.5px;top:263px;width:215.4px;height:1px;background:#e3e3e3"></div>
<div class="t" style="left:9.200000000000001px;top:256.02px;font-size:6.000px;line-height:6.000px;color:#383838;">29/1/2020</div>
<div class="t" style="left:67.60000000000001px;top:255.69px;font-size:6.600px;line-height:6.600px;color:#383838;transform:scaleX(0.8482);transform-origin:left center;">Αιμοκάθαρση με διπανθρακικά</div>
<div class="t" style="left:174.4px;top:255.69px;font-size:6.600px;line-height:6.600px;color:#383838;transform:scaleX(0.8482);transform-origin:left center;">Όχι</div>
<div style="position:absolute;left:0.5px;top:272px;width:215.4px;height:1px;background:#e3e3e3"></div>
<div class="t" style="left:9.200000000000001px;top:265.60px;font-size:6.000px;line-height:6.000px;color:#383838;">31/1/2020</div>
<div class="t" style="left:67.60000000000001px;top:265.27px;font-size:6.600px;line-height:6.600px;color:#383838;transform:scaleX(0.8482);transform-origin:left center;">Αιμοκάθαρση με διπανθρακικά</div>
<div class="t" style="left:174.4px;top:265.27px;font-size:6.600px;line-height:6.600px;color:#383838;transform:scaleX(0.8482);transform-origin:left center;">Όχι</div>
<div style="position:absolute;left:0.5px;top:282px;width:215.4px;height:1px;background:#e3e3e3"></div>
<div class="t" style="left:9.200000000000001px;top:275.18px;font-size:6.000px;line-height:6.000px;color:#383838;">3/2/2020</div>
<div class="t" style="left:67.60000000000001px;top:274.85px;font-size:6.600px;line-height:6.600px;color:#383838;transform:scaleX(0.8482);transform-origin:left center;">Αιμοκάθαρση με διπανθρακικά</div>
<div class="t" style="left:174.4px;top:274.85px;font-size:6.600px;line-height:6.600px;color:#383838;transform:scaleX(0.8482);transform-origin:left center;">Όχι</div>
<div style="position:absolute;left:0.5px;top:291px;width:215.4px;height:1px;background:#e3e3e3"></div>
<div class="t" style="left:9.200000000000001px;top:284.77px;font-size:6.000px;line-height:6.000px;color:#383838;">5/2/2020</div>
<div class="t" style="left:67.60000000000001px;top:284.44px;font-size:6.600px;line-height:6.600px;color:#383838;transform:scaleX(0.8482);transform-origin:left center;">Αιμοκάθαρση με διπανθρακικά</div>
<div class="t" style="left:174.4px;top:284.44px;font-size:6.600px;line-height:6.600px;color:#383838;transform:scaleX(0.8482);transform-origin:left center;">Όχι</div>
<div style="position:absolute;left:0.5px;top:301px;width:215.4px;height:1px;background:#e3e3e3"></div>
<div class="t" style="left:9.200000000000001px;top:294.35px;font-size:6.000px;line-height:6.000px;color:#383838;">7/2/2020</div>
<div class="t" style="left:67.60000000000001px;top:294.02px;font-size:6.600px;line-height:6.600px;color:#383838;transform:scaleX(0.8482);transform-origin:left center;">Αιμοκάθαρση με διπανθρακικά</div>
<div class="t" style="left:174.4px;top:294.02px;font-size:6.600px;line-height:6.600px;color:#383838;transform:scaleX(0.8482);transform-origin:left center;">Όχι</div>
<div style="position:absolute;left:0.5px;top:310px;width:215.4px;height:1px;background:#e3e3e3"></div>
<div class="t" style="left:9.200000000000001px;top:303.93px;font-size:6.000px;line-height:6.000px;color:#383838;">10/2/2020</div>
<div class="t" style="left:67.60000000000001px;top:303.60px;font-size:6.600px;line-height:6.600px;color:#383838;transform:scaleX(0.8482);transform-origin:left center;">Αιμοκάθαρση με διπανθρακικά</div>
<div class="t" style="left:174.4px;top:303.60px;font-size:6.600px;line-height:6.600px;color:#383838;transform:scaleX(0.8482);transform-origin:left center;">Όχι</div>
<div style="position:absolute;left:0.5px;top:320px;width:215.4px;height:1px;background:#e3e3e3"></div>
<div class="t" style="left:9.200000000000001px;top:313.51px;font-size:6.000px;line-height:6.000px;color:#383838;">12/2/2020</div>
<div class="t" style="left:67.60000000000001px;top:313.18px;font-size:6.600px;line-height:6.600px;color:#383838;transform:scaleX(0.8482);transform-origin:left center;">Αιμοκάθαρση με διπανθρακικά</div>
<div class="t" style="left:174.4px;top:313.18px;font-size:6.600px;line-height:6.600px;color:#383838;transform:scaleX(0.8482);transform-origin:left center;">Όχι</div>
<div style="position:absolute;left:0.5px;top:330px;width:215.4px;height:1px;background:#e3e3e3"></div>
<div class="t" style="left:9.200000000000001px;top:323.10px;font-size:6.000px;line-height:6.000px;color:#383838;">14/2/2020</div>
<div class="t" style="left:67.60000000000001px;top:322.77px;font-size:6.600px;line-height:6.600px;color:#383838;transform:scaleX(0.8482);transform-origin:left center;">Αιμοκάθαρση με διπανθρακικά</div>
<div class="t" style="left:174.4px;top:322.77px;font-size:6.600px;line-height:6.600px;color:#383838;transform:scaleX(0.8482);transform-origin:left center;">Όχι</div>
<div style="position:absolute;left:0.5px;top:339px;width:215.4px;height:1px;background:#e3e3e3"></div>
<div class="t" style="left:9.200000000000001px;top:332.68px;font-size:6.000px;line-height:6.000px;color:#383838;">17/2/2020</div>
<div class="t" style="left:67.60000000000001px;top:332.35px;font-size:6.600px;line-height:6.600px;color:#383838;transform:scaleX(0.8482);transform-origin:left center;">Αιμοκάθαρση με διπανθρακικά</div>
<div class="t" style="left:174.4px;top:332.35px;font-size:6.600px;line-height:6.600px;color:#383838;transform:scaleX(0.8482);transform-origin:left center;">Όχι</div>
<div style="position:absolute;left:0.5px;top:349px;width:215.4px;height:1px;background:#e3e3e3"></div>
<div class="t" style="left:9.200000000000001px;top:342.26px;font-size:6.000px;line-height:6.000px;color:#383838;">19/2/2020</div>
<div class="t" style="left:67.60000000000001px;top:341.93px;font-size:6.600px;line-height:6.600px;color:#383838;transform:scaleX(0.8482);transform-origin:left center;">Αιμοκάθαρση με διπανθρακικά</div>
<div class="t" style="left:174.4px;top:341.93px;font-size:6.600px;line-height:6.600px;color:#383838;transform:scaleX(0.8482);transform-origin:left center;">Όχι</div>
<div style="position:absolute;left:0.5px;top:358px;width:215.4px;height:1px;background:#e3e3e3"></div>
<div class="t" style="left:9.200000000000001px;top:351.85px;font-size:6.000px;line-height:6.000px;color:#383838;">21/2/2020</div>
<div class="t" style="left:67.60000000000001px;top:351.52px;font-size:6.600px;line-height:6.600px;color:#383838;transform:scaleX(0.8482);transform-origin:left center;">Αιμοκάθαρση με διπανθρακικά</div>
<div class="t" style="left:174.4px;top:351.52px;font-size:6.600px;line-height:6.600px;color:#383838;transform:scaleX(0.8482);transform-origin:left center;">Όχι</div>
<div style="position:absolute;left:0.5px;top:368px;width:215.4px;height:1px;background:#e3e3e3"></div>
<div class="t" style="left:9.200000000000001px;top:361.43px;font-size:6.000px;line-height:6.000px;color:#383838;">24/2/2020</div>
<div class="t" style="left:67.60000000000001px;top:361.10px;font-size:6.600px;line-height:6.600px;color:#383838;transform:scaleX(0.8482);transform-origin:left center;">Αιμοκάθαρση με διπανθρακικά</div>
<div class="t" style="left:174.4px;top:361.10px;font-size:6.600px;line-height:6.600px;color:#383838;transform:scaleX(0.8482);transform-origin:left center;">Όχι</div>
</div>
<div style="position:absolute;left:228.75px;top:182.4px;width:794.25px;height:359px;border:1px solid #d0d0d0;border-right:none;box-sizing:border-box"></div>
<div style="position:absolute;left:257.5px;top:167.3px;width:24.1px;height:15.3px;background:#e0e0e0;border:1px solid #cdcdcd;box-sizing:border-box"></div>
<div style="position:absolute;left:229.1px;top:167px;width:28.4px;height:17px;background:#f0f0f0;border:1px solid #cdcdcd;border-bottom:none;box-sizing:border-box"></div>
<div class="t" style="left:233px;top:173.06px;font-size:6.435px;line-height:6.435px;color:#444;transform:scaleX(0.9091);transform-origin:left center;">Στοιχεία</div>
<div class="t" style="left:260.6px;top:173.09px;font-size:6.380px;line-height:6.380px;color:#444;transform:scaleX(0.9091);transform-origin:left center;">Σχόλια</div>
<div style="position:absolute;left:235.2px;top:188.75px;width:780.3px;height:344.75px;"></div>
<div style="position:absolute;left:1015.5px;top:182.4px;width:1px;height:351.5px;background:#d0d0d0"></div>
<div style="position:absolute;left:228.75px;top:533.75px;width:787px;height:1px;background:#d0d0d0"></div>
<div style="position:absolute;left:1023px;top:100px;width:1px;height:441px;background:#d4d4d4"></div>
<div style="position:absolute;left:2px;top:541.25px;width:1021px;height:1px;background:#d0d0d0"></div>
<div style="position:absolute;left:0px;top:554px;width:1024px;height:1px;background:#555"></div>
<div style="position:absolute;left:235.2px;top:188.75px;width:774.05px;height:72.94999999999999px;border:1px solid #d2d2d2;box-sizing:border-box"></div>
<div style="position:absolute;left:236.2px;top:189.75px;width:772.05px;height:12.75px;background:#dedede"></div>
<div class="t" style="left:240.9px;top:193.01px;font-size:6.900px;line-height:6.900px;color:#444;transform:scaleX(0.9060);transform-origin:left center;font-weight:bold">Στοιχεία Συνεδρίας</div>
<div class="t" style="left:242.8px;top:214.25px;font-size:6.270px;line-height:6.270px;color:#8c93a3;transform:scaleX(0.9091);transform-origin:left center;">Ημερομηνία</div>
<div style="position:absolute;left:300.9px;top:212.3px;width:163.60000000000002px;height:9.799999999999983px;background:#f0f0f0;border:1px solid #cacaca;box-sizing:border-box"></div>
<div class="t" style="left:302.4px;top:215.06px;font-size:5.700px;line-height:5.700px;color:#8a8a8a;">26/12/2019</div>
<svg style="position:absolute;left:458.5px;top:216.2px" width="4" height="3" viewBox="0 0 4 3"><path d="M0 0 L3 0 L1.5 1.8Z" fill="#c8c8c8"/></svg>
<div class="t" style="left:242.8px;top:229.45px;font-size:6.270px;line-height:6.270px;color:#8c93a3;transform:scaleX(0.9091);transform-origin:left center;">Τύπος Αιμοκάθαρσης</div>
<div style="position:absolute;left:300.9px;top:227.5px;width:163.60000000000002px;height:9.400000000000006px;background:#f0f0f0;border:1px solid #cacaca;box-sizing:border-box"></div>
<div class="t" style="left:302.4px;top:229.75px;font-size:6.270px;line-height:6.270px;color:#8a8a8a;transform:scaleX(0.9091);transform-origin:left center;">Αιμοκάθαρση με διπανθρακικά</div>
<svg style="position:absolute;left:458.5px;top:231.2px" width="4" height="3" viewBox="0 0 4 3"><path d="M0 0 L3 0 L1.5 1.8Z" fill="#c8c8c8"/></svg>
<div class="t" style="left:242.8px;top:244.55px;font-size:6.270px;line-height:6.270px;color:#8c93a3;transform:scaleX(0.9091);transform-origin:left center;">Τύπος Ασθ.</div>
<div style="position:absolute;left:300.9px;top:242.1px;width:163.60000000000002px;height:9.5px;background:#f0f0f0;border:1px solid #cacaca;box-sizing:border-box"></div>
<div class="t" style="left:302.4px;top:244.40px;font-size:6.270px;line-height:6.270px;color:#8a8a8a;transform:scaleX(0.9091);transform-origin:left center;">Τακτικός</div>
<svg style="position:absolute;left:458.5px;top:245.85px" width="4" height="3" viewBox="0 0 4 3"><path d="M0 0 L3 0 L1.5 1.8Z" fill="#c8c8c8"/></svg>
<div class="t" style="left:469px;top:214.45px;font-size:6.270px;line-height:6.270px;color:#8c93a3;transform:scaleX(0.9091);transform-origin:left center;">Δωμάτιο</div>
<div style="position:absolute;left:496.3px;top:212.3px;width:99.69999999999999px;height:10.099999999999994px;background:#f0f0f0;border:1px solid #cacaca;box-sizing:border-box"></div>
<svg style="position:absolute;left:590px;top:216.35000000000002px" width="4" height="3" viewBox="0 0 4 3"><path d="M0 0 L3 0 L1.5 1.8Z" fill="#c8c8c8"/></svg>
<div class="t" style="left:469px;top:229.55px;font-size:6.270px;line-height:6.270px;color:#8c93a3;transform:scaleX(0.9091);transform-origin:left center;">Έκτακτο</div>
<div style="position:absolute;left:496.3px;top:227.5px;width:120.09999999999997px;height:9.5px;background:#f0f0f0;border:1px solid #cacaca;box-sizing:border-box"></div>
<div class="t" style="left:497.8px;top:229.80px;font-size:6.270px;line-height:6.270px;color:#8a8a8a;transform:scaleX(0.9091);transform-origin:left center;">Όχι</div>
<svg style="position:absolute;left:610.4px;top:231.25px" width="4" height="3" viewBox="0 0 4 3"><path d="M0 0 L3 0 L1.5 1.8Z" fill="#c8c8c8"/></svg>
<div style="position:absolute;left:550px;top:266.5px;width:3.5px;height:0.9px;background:#e05a5a"></div>
<div style="position:absolute;left:235.2px;top:266.2px;width:774.05px;height:30.30000000000001px;border:1px solid #d2d2d2;box-sizing:border-box"></div>
<div class="t" style="left:242.9px;top:278.35px;font-size:6.270px;line-height:6.270px;color:#555;transform:scaleX(0.9091);transform-origin:left center;">Εισιτήριο</div>
<div style="position:absolute;left:300px;top:275.8px;width:164.60000000000002px;height:9.899999999999977px;background:#fff;border:1px solid #c8c8c8;box-sizing:border-box"></div>
<div class="t" style="left:301.5px;top:278.62px;font-size:5.700px;line-height:5.700px;color:#333;">2019000924114</div>
<div style="position:absolute;left:470.5px;top:274.4px;width:80px;height:11px;background:#fff;border:1px solid #c6c6c6;box-sizing:border-box"></div>
<div class="t" style="left:360.5px;width:300px;text-align:center;top:277.35px;font-size:6.270px;line-height:6.270px;color:#333;transform:scaleX(0.9091);transform-origin:center center;">Ακύρωση εισιτηρίου</div>
<div style="position:absolute;left:235.2px;top:300.4px;width:774.05px;height:227.10000000000002px;border:1px solid #d2d2d2;box-sizing:border-box"></div>
<div style="position:absolute;left:236.2px;top:301.4px;width:772.05px;height:12.4px;background:#dedede"></div>
<div class="t" style="left:240.5px;top:303.71px;font-size:6.710px;line-height:6.710px;color:#444;transform:scaleX(0.9091);transform-origin:left center;font-weight:bold">Αναλώσιμα</div>
<div style="position:absolute;left:243.4px;top:323.2px;width:62.4px;height:13.5px;background:#fff;border:1px solid #d4d4d4;box-sizing:border-box"></div>
<svg style="position:absolute;left:249.2px;top:327.8px" width="5" height="5" viewBox="0 0 5 5"><path d="M2.3 0.2 V4.4 M0.2 2.3 H4.4" stroke="#aaa" stroke-width="1.3"/></svg>
<div style="position:absolute;left:263.5px;top:329.6px;width:5px;height:1.3px;background:#aaa"></div>
<svg style="position:absolute;left:279px;top:327.4px" width="7" height="6" viewBox="0 0 7 6"><path d="M0.5 3 L2.3 4.8 L6 0.6" fill="none" stroke="#999" stroke-width="0.9"/></svg>
<svg style="position:absolute;left:295.8px;top:328.4px" width="4" height="4" viewBox="0 0 4 4"><path d="M0.4 0.4 L3.6 3.6 M3.6 0.4 L0.4 3.6" stroke="#999" stroke-width="0.8"/></svg>
<div style="position:absolute;left:242.9px;top:340.5px;width:758.35px;height:177.0px;background:#fff;border:1px solid #d0d0d0;box-sizing:border-box"></div>
<div class="t" style="left:247.6px;top:347.82px;font-size:6.325px;line-height:6.325px;color:#9a9a9a;transform:scaleX(0.9091);transform-origin:left center;">Σύρετε μια Στήλη για να ομαδοποιήσετε σύμφωνα μ'αυτή</div>
<div style="position:absolute;left:243.4px;top:359.3px;width:757.35px;height:14.6px;background:#f0f0f0;border-top:1px solid #d8d8d8;border-bottom:1px solid #d8d8d8;box-sizing:border-box"></div>
<div style="position:absolute;left:243.4px;top:373.5px;width:8.1px;height:28.6px;background:#f0f0f0"></div>
<div style="position:absolute;left:251.3px;top:359.3px;width:0.8px;height:42.8px;background:#d9d9d9"></div>
<div style="position:absolute;left:403px;top:359.3px;width:0.8px;height:42.8px;background:#d9d9d9"></div>
<div style="position:absolute;left:528.8px;top:359.3px;width:0.8px;height:42.8px;background:#d9d9d9"></div>
<div style="position:absolute;left:855.5px;top:359.3px;width:0.8px;height:42.8px;background:#d9d9d9"></div>
<div class="t" style="left:254px;top:364.41px;font-size:6.160px;line-height:6.160px;color:#555;transform:scaleX(0.9091);transform-origin:left center;">Ημερομηνία</div>
<div class="t" style="left:405.5px;top:364.41px;font-size:6.160px;line-height:6.160px;color:#555;transform:scaleX(0.9091);transform-origin:left center;">Ώρα</div>
<div class="t" style="left:531px;top:364.41px;font-size:6.160px;line-height:6.160px;color:#555;transform:scaleX(0.9091);transform-origin:left center;">Αναλώσιμο</div>
<div class="t" style="left:857.5px;top:364.41px;font-size:6.160px;line-height:6.160px;color:#555;transform:scaleX(0.9091);transform-origin:left center;">Ποσότητα</div>
<div style="position:absolute;left:243.4px;top:382.5px;width:757.35px;height:1px;background:#dedede"></div>
<div class="t" style="left:253px;top:376.37px;font-size:5.700px;line-height:5.700px;color:#333;">26/12/2019</div>
<div class="t" style="left:529.5px;top:376.42px;font-size:5.600px;line-height:5.600px;color:#333;transform:scaleX(0.9300);transform-origin:left center;">REVACLEAR 400</div>
<div class="t" style="left:856.5px;top:376.37px;font-size:5.700px;line-height:5.700px;color:#333;">1</div>
<div style="position:absolute;left:243.4px;top:392.0px;width:757.35px;height:1px;background:#dedede"></div>
<div class="t" style="left:253px;top:385.87px;font-size:5.700px;line-height:5.700px;color:#333;">26/12/2019</div>
<div class="t" style="left:529.5px;top:385.92px;font-size:5.600px;line-height:5.600px;color:#333;transform:scaleX(0.9300);transform-origin:left center;">FISTULA NEEDLE 17G VENOUS GAMBRO</div>
<div class="t" style="left:856.5px;top:385.87px;font-size:5.700px;line-height:5.700px;color:#333;">1</div>
<div style="position:absolute;left:243.4px;top:401.5px;width:757.35px;height:1px;background:#dedede"></div>
<div class="t" style="left:253px;top:395.37px;font-size:5.700px;line-height:5.700px;color:#333;">26/12/2019</div>
<div class="t" style="left:529.5px;top:395.42px;font-size:5.600px;line-height:5.600px;color:#333;transform:scaleX(0.9300);transform-origin:left center;">FISTULA NEEDLE 17G ARTERIAL GAMBRO</div>
<div class="t" style="left:856.5px;top:395.37px;font-size:5.700px;line-height:5.700px;color:#333;">1</div>
<svg style="position:absolute;left:244.5px;top:376.3px" width="6" height="5" viewBox="0 0 6 5"><path d="M0.5 2.5 H5 M3 0.7 L5 2.5 L3 4.3" fill="none" stroke="#3a7cd0" stroke-width="0.8"/></svg>
<div style="position:absolute;left:626px;top:115.3px;width:168px;height:29px;background:#000;opacity:0.08;filter:blur(1.5px);transform:translate(1.5px,1.5px)"></div>
<div style="position:absolute;left:625.4px;top:114.5px;width:167px;height:28.8px;background:#fff;border:1px solid #c8c8c8;box-sizing:border-box"></div>
<div class="t" style="left:644.9px;top:119.02px;font-size:6.500px;line-height:6.500px;color:#444;">Διαγραφή Εισιτηρίου Ακυρωμένης Συνεδρίας</div>
<div class="t" style="left:644.9px;top:133.23px;font-size:6.500px;line-height:6.500px;color:#444;transform:scaleX(0.9770);transform-origin:left center;">Σύνδεση Εισιτηρίου με Αναγγελμένη Συνεδρία</div>
<div style="position:absolute;left:623.3px;top:98.5px;width:43.3px;height:17px;border:1.2px solid #df2a35;box-sizing:border-box"></div>
<div style="position:absolute;left:660.3px;top:90.6px;width:12px;height:12px;border-radius:50%;background:#e8141e;box-shadow:0.6px 0.8px 1px rgba(0,0,0,0.35);color:#fff;font-weight:bold;font-size:7px;line-height:12px;text-align:center">1</div>
<div style="position:absolute;left:777.2px;top:114.3px;width:12px;height:12px;border-radius:50%;background:#e8141e;box-shadow:0.6px 0.8px 1px rgba(0,0,0,0.35);color:#fff;font-weight:bold;font-size:7px;line-height:12px;text-align:center">2</div>
<div style="position:absolute;left:777.2px;top:129.5px;width:12px;height:12px;border-radius:50%;background:#e8141e;box-shadow:0.6px 0.8px 1px rgba(0,0,0,0.35);color:#fff;font-weight:bold;font-size:7px;line-height:12px;text-align:center">3</div>
</body></html>
